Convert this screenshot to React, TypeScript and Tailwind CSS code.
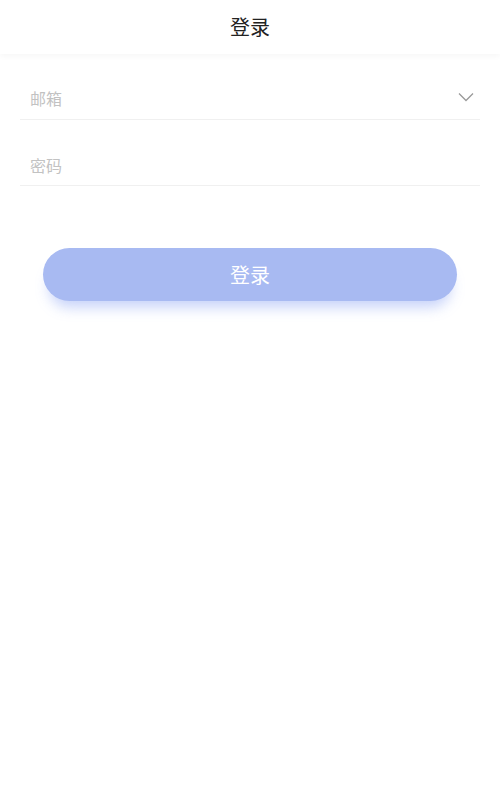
import React from "react";

export default function App() {
  return (
    <div className="min-h-[801px] w-full bg-white" style={{ fontFamily: '"Noto Sans CJK SC", "Noto Sans", sans-serif' }}>
      <header className="relative z-10 flex h-[54px] items-center justify-center bg-white shadow-[0_2px_6px_rgba(0,0,0,0.04)]">
        <h1 className="text-[20px] font-normal leading-none text-[#222]">登录</h1>
      </header>
      <div className="px-5">
        <div className="mt-[12px] flex h-[54px] items-center justify-between border-b border-[#f0f0f0] pl-[10px] pr-[6px] pt-[11px]">
          <span className="text-[16px] text-[#c2c2c2]">邮箱</span>
          <svg width="16" height="10" viewBox="0 0 16 10" fill="none" className="mt-[-2px]">
            <path d="M1 1.5 L8 8.5 L15 1.5" stroke="#9a9a9a" strokeWidth="1.3" />
          </svg>
        </div>
        <div className="mt-[12px] flex h-[54px] items-center border-b border-[#f0f0f0] pl-[10px] pt-[12px]">
          <span className="text-[16px] text-[#c2c2c2]">密码</span>
        </div>
      </div>
      <div className="px-[43px] pt-[62px]">
        <button className="flex h-[53px] w-full items-center justify-center rounded-full bg-[#a8baf2] text-[20px] text-white shadow-[0_12px_14px_-6px_rgba(110,140,240,0.4)]">
          登录
        </button>
      </div>
    </div>
  );
}
